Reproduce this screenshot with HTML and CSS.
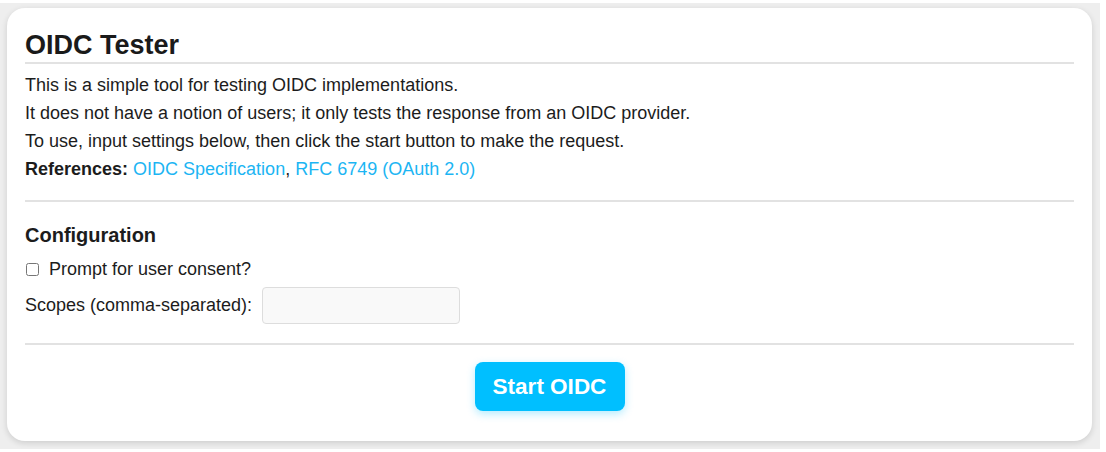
FILE: index.html
```html
<!DOCTYPE html>
<html>
<head>
<meta charset="utf-8">
<link rel="stylesheet" href="styles.css">
</head>
<body>
<div class="frame">
  <main class="card">
    <h1 class="title">OIDC Tester</h1>
    <div class="intro">
      <div>This is a simple tool for testing OIDC implementations.</div>
      <div>It does not have a notion of users; it only tests the response from an OIDC provider.</div>
      <div>To use, input settings below, then click the start button to make the request.</div>
      <div><strong>References:</strong> <a href="#">OIDC Specification</a>, <a href="#">RFC 6749 (OAuth 2.0)</a></div>
    </div>
    <div class="rule rule-a"></div>
    <h2 class="section">Configuration</h2>
    <label class="check-row"><input type="checkbox" class="check"> Prompt for user consent?</label>
    <div class="field-row">
      <label class="field-label" for="scopes">Scopes (comma-separated):</label>
      <input id="scopes" class="field-input" type="text">
    </div>
    <div class="rule rule-b"></div>
    <div class="actions">
      <button class="start">Start OIDC</button>
    </div>
  </main>
</div>
</body>
</html>
```
FILE: styles.css
```css
html, body {
  margin: 0;
  padding: 0;
  background: #ffffff;
}
body {
  font-family: "Liberation Sans", Arial, sans-serif;
  color: #1c1c1c;
}
.frame {
  margin: 3px 6px 0 0;
  height: 446px;
  box-sizing: border-box;
  background: #eeeeee;
  padding: 5px 8px 0 7px;
}
.card {
  background: #ffffff;
  border-radius: 18px;
  box-shadow: 0 2px 6px rgba(0, 0, 0, 0.14);
  height: 433px;
  box-sizing: border-box;
  padding: 22px 18px 0 18px;
}
.title {
  margin: 0;
  font-size: 27px;
  line-height: 30px;
  font-weight: bold;
  padding-bottom: 2px;
  border-bottom: 2px solid #e2e2e2;
  color: #1a1a1a;
}
.intro {
  margin-top: 7px;
  font-size: 18px;
  line-height: 28px;
}
.intro a {
  color: #1cb5f3;
  text-decoration: none;
}
.rule {
  height: 2px;
  background: #e2e2e2;
}
.rule-a {
  margin-top: 17px;
}
.section {
  margin: 21px 0 0 0;
  font-size: 20px;
  line-height: 24px;
  font-weight: bold;
}
.check-row {
  display: flex;
  align-items: center;
  margin-top: 10px;
  height: 24px;
  font-size: 18px;
}
.check {
  width: 13px;
  height: 13px;
  margin: 0 10px 0 1px;
}
.field-row {
  display: flex;
  align-items: center;
  gap: 10px;
  margin-top: 6px;
  font-size: 18px;
}
.field-input {
  width: 198px;
  height: 37px;
  box-sizing: border-box;
  border: 1px solid #dddddd;
  border-radius: 4px;
  background: #f9f9f9;
}
.rule-b {
  margin-top: 19px;
}
.actions {
  display: flex;
  justify-content: center;
  margin-top: 17px;
}
.start {
  width: 150px;
  height: 49px;
  border: none;
  border-radius: 8px;
  background: #00bfff;
  color: #ffffff;
  font-family: "Liberation Sans", Arial, sans-serif;
  font-weight: bold;
  font-size: 22.5px;
  box-shadow: 0 3px 8px rgba(0, 191, 255, 0.3);
}
```
